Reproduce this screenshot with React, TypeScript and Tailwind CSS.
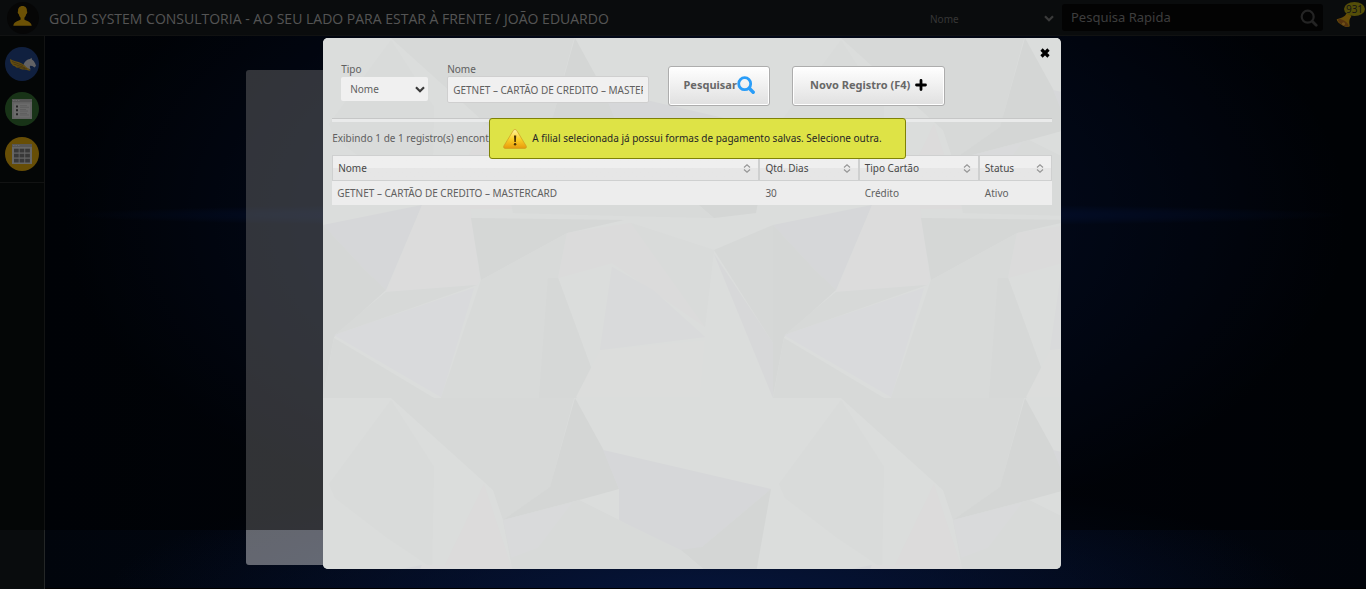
import type { ReactNode } from "react";

function Chevron({ className }: { className: string }) {
  return (
    <svg viewBox="0 0 10 7" aria-hidden="true" className={className}>
      <path d="M1 1.200 5 5.200 9 1.200" fill="none" stroke="currentColor" strokeWidth="2.200" />
    </svg>
  );
}

function PersonIcon() {
  return (
    <svg viewBox="0 0 32 32" className="size-8" aria-hidden="true">
      <circle cx="16" cy="16" r="16" fill="#0c0c0c" />
      <path
        d="M16 2.800c-3 0-4.700 2.200-4.400 5.200-.7.200-.5 2.400.7 2.900.3 1.600 1 2.700 1.800 3.500v1.900c-.6 1.200-6.600 1.400-7.300 6.200h18.400c-.7-4.800-6.700-5-7.300-6.200v-1.900c.8-.8 1.500-1.900 1.800-3.500 1.200-.5 1.400-2.700.7-2.900.3-3-1.400-5.200-4.400-5.200Z"
        transform="translate(-.5 1.300)"
        fill="#d8a20a"
      />
    </svg>
  );
}

function PegasusIcon() {
  return (
    <svg viewBox="0 0 34 34" className="size-[34px]" aria-hidden="true">
      <circle cx="17" cy="17" r="17" fill="#21407f" />
      <path
        d="M5 12c3 2 8 2.500 11.500 4.200 2 1 4.500 3 6.500 3.800l2.500 3.800c-3-.3-4.500-1-6-1.200-3 .1-4.500-.8-5.500-1.600-2 0-3.500-.8-4-1.800-1.800-.2-2.600-1-3-2-1.200-.8-2-2.800-2-5.200Z"
        fill="#c99a20"
      />
      <path d="M7 14.500 18 18.500M8.500 17 20 20.800M12 20l10 2" stroke="#7a6028" strokeWidth=".7" />
      <path
        d="M18.500 17.500c1-3 3.500-5.200 6.500-5.500l1.500-1.300.4 1.700c1.500.6 2.300 2.200 3.300 4l.8 2.400-1.400 1.600-2.300-1.300-2.300-.3c-.4 1.300.2 2.600.8 3.700-2.300-.6-4.800-2.600-7.300-5.300Z"
        fill="#c4c5ca"
      />
    </svg>
  );
}

function ListIcon() {
  return (
    <svg viewBox="0 0 34 34" className="size-[34px]" aria-hidden="true">
      <circle cx="17" cy="17" r="17" fill="#30672e" />
      <rect x="7" y="7" width="20" height="20" rx=".6" fill="#c4c4c4" />
      <rect x="7" y="7" width="20" height="3" fill="#acacac" />
      <path d="M8 8.500h1.500M10.500 8.500H12M13 8.500h1.500" stroke="#d0d0d0" />
      <rect x="9" y="11.500" width="16" height="14" fill="#d6d6d6" />
      <path d="M11 13.500h2v2h-2zM11 17.300h2v2h-2zM11 21.200h2v2h-2z" fill="#4a4a4a" />
      <path d="M15 13.700h7M15 15.300h9M15 17.500h6M15 19.100h8M15 21.400h7M15 23h9" stroke="#b5b5b5" strokeWidth=".8" />
    </svg>
  );
}

function GridIcon() {
  const steps = [0, 1, 2];
  return (
    <svg viewBox="0 0 34 34" className="size-[34px]" aria-hidden="true">
      <circle cx="17" cy="17" r="17" fill="#cf9c0c" />
      <rect x="7" y="7" width="20" height="20" rx=".6" fill="#cccccc" />
      <rect x="7" y="7" width="20" height="3" fill="#acacac" />
      <path d="M8 8.500h1.500M10.500 8.500H12M13 8.500h1.500" stroke="#d0d0d0" />
      {steps.map((r) =>
        steps.map((c) => (
          <rect key={`${r}-${c}`} x={9 + c * 5.6} y={11.7 + r * 5} width="4.700" height="3.800" fill="#707070" />
        )),
      )}
    </svg>
  );
}

function SearchIcon({ className, weight }: { className: string; weight: number }) {
  return (
    <svg viewBox="0 0 18 18" aria-hidden="true" className={className}>
      <circle cx="7.700" cy="7.700" r="6" fill="none" stroke="currentColor" strokeWidth={weight} />
      <path d="m12.500 12.500 3.700 3.700" stroke="currentColor" strokeWidth={weight + 0.6} strokeLinecap="round" />
    </svg>
  );
}

function BellIcon() {
  return (
    <svg viewBox="0 0 16 16" className="size-4" aria-hidden="true">
      <path
        d="M11.500 1c2 .8 3.300 2 3.800 3.800-1.700 1.700-2 3.800-2 6l.5 3.400c-1.300 1.300-4 1-7-.8C3 11.500.8 9.200.7 7.200l3.400-.9c2.900-.9 5-2.200 6-4.300Z"
        fill="#d09a10"
      />
      <ellipse cx="7.200" cy="10.800" rx="6.200" ry="2.300" transform="rotate(33 7.200 10.800)" fill="#a8641c" />
      <circle cx="7.500" cy="11.800" r="1.600" fill="#e0a030" />
    </svg>
  );
}

function WarningIcon() {
  return (
    <svg viewBox="0 0 24 20" className="h-5 w-6 shrink-0" aria-hidden="true">
      <defs>
        <linearGradient id="warn" x1="0" y1="0" x2="0" y2="1">
          <stop offset="0" stopColor="#fdf3a0" />
          <stop offset=".5" stopColor="#fbd128" />
          <stop offset="1" stopColor="#e89a0c" />
        </linearGradient>
      </defs>
      <path d="M10.500 1.200q1.500-1.600 3 0l9.800 16q.5 2-1.300 2.200H2q-1.800-.2-1.300-2.200Z" fill="url(#warn)" stroke="#d09a20" strokeWidth=".7" />
      <path d="M11 6.500h2.200l-.4 6.500h-1.400Z" fill="#4a3205" />
      <circle cx="12.100" cy="15.300" r="1.200" fill="#4a3205" />
    </svg>
  );
}

function PlusIcon() {
  return (
    <svg viewBox="0 0 12 12" className="size-3" aria-hidden="true">
      <path d="M6 1.500v9M1.500 6h9" stroke="#000" strokeWidth="2.800" strokeLinecap="round" />
    </svg>
  );
}

function SortIcon() {
  return (
    <svg viewBox="0 0 8 9" className="h-[9px] w-2 shrink-0" aria-hidden="true">
      <path d="M1 3.500 4 .8 7 3.500M1 5.500l3 2.700 3-2.700" fill="none" stroke="#969696" strokeWidth="1.200" />
    </svg>
  );
}

const facets: [string, string][] = [
  ["68,0 251,0 227,89 180,122 170,92", "#d7d9d8"],
  ["252,0 280,51 296,91 256,102 180,122 227,89", "#d4d6d5"],
  ["280,52 448,91 379,149 358,156 296,122 296,91", "#d6d7d9"],
  ["448,91 433,175 391,180 358,152 379,149", "#d4d6d5"],
  ["256,102 296,122 358,152 391,180 300,178 190,175 180,122", "#d8dad9"],
  ["180,122 250,104 215,150 188,160", "#d9dadb"],
  ["68,2 6,86 12,100 63,139 109,170 111,69", "#d9dbda"],
  ["161,86 189,171 120,171", "#dcdbdb"],
  ["0,187 99,167 63,252 42,232", "#d6d7d9"],
  ["0,187 42,232 63,252 11,299 0,358", "#d5d7d6"],
  ["99,167 147,167 157,242 154,247 63,254", "#dcdcdc"],
  ["63,254 154,247 60,280 11,297", "#d7d9d8"],
  ["148,180 301,182 244,195 158,242", "#d5d7d6"],
  ["158,242 244,195 235,240 270,335 253,360 118,360", "#d8dad9"],
  ["225,240 235,240 270,335 253,360 216,360", "#d6d8d7"],
  ["11,297 151,250 118,359", "#d9dadc"],
  ["11,300 111,360 0,360", "#d7d9d8"],
  ["244,195 308,185 382,289 289,225 235,240", "#dbdbdb"],
  ["308,185 391,212 382,289", "#d9dbda"],
  ["289,229 330,252 382,299 277,312", "#d9dadb"],
  ["277,312 382,302 377,359 253,359", "#dcdddc"],
  ["391,212 450,187 450,305", "#d6d8d7"],
  ["391,216 450,305 450,360", "#d7d8d9"],
];

function FacetBackdrop() {
  return (
    <svg className="absolute inset-0 size-full" aria-hidden="true">
      <defs>
        <pattern id="facets" width="450" height="360" patternUnits="userSpaceOnUse">
          <rect width="450" height="360" fill="#dbdddc" />
          {facets.map(([points, fill]) => (
            <polygon key={points} points={points} fill={fill} />
          ))}
        </pattern>
      </defs>
      <rect width="100%" height="100%" fill="url(#facets)" />
    </svg>
  );
}

const sideItems: { label: string; icon: ReactNode }[] = [
  { label: "Pegasus", icon: <PegasusIcon /> },
  { label: "Lista", icon: <ListIcon /> },
  { label: "Grade", icon: <GridIcon /> },
];

const columns = [
  { title: "Nome", width: "w-[59.500%]" },
  { title: "Qtd. Dias", width: "w-[13.800%]" },
  { title: "Tipo Cartão", width: "w-[16.700%]" },
  { title: "Status", width: "w-[10%]" },
];

const rows = [["GETNET – CARTÃO DE CREDITO – MASTERCARD", "30", "Crédito", "Ativo"]];

const buttonClass =
  "flex h-10 items-center justify-center rounded-[3px] border border-[#adadad] bg-linear-to-b from-white to-[#e0e0e0] pb-[2px] text-[11px] font-bold text-[#686868] shadow-[inset_0_0_0_1px_#fff]";

function SearchDialog() {
  return (
    <section
      role="dialog"
      aria-label="Pesquisa"
      className="relative h-[calc(90vh+1px)] w-[54vw] overflow-hidden rounded-[5px] bg-[#dadcdb] text-[10px] text-[#606060]"
    >
      <FacetBackdrop />
      <div className="relative flex flex-col px-[9px] pt-7">
        <button type="button" aria-label="Fechar" className="absolute top-[9px] right-[10px]">
          <svg viewBox="0 0 12 12" className="size-3" aria-hidden="true">
            <path d="m2.500 2.500 7 7M9.500 2.500l-7 7" stroke="#000" strokeWidth="3.200" />
          </svg>
        </button>

        <form className="flex h-[52px] items-start pl-[9px]">
          <div className="mr-[19px] flex w-[87px] flex-col">
            <label htmlFor="tipo" className="-mt-1 h-[15px] leading-[14px]">
              Tipo
            </label>
            <div className="relative">
              <select id="tipo" className="h-6 w-full appearance-none rounded-[2px] bg-[#f0f0f0] pl-[9px]">
                <option>Nome</option>
              </select>
              <Chevron className="pointer-events-none absolute top-[9px] right-[3px] h-[7px] w-[10px] text-[#3c3c3c]" />
            </div>
          </div>
          <div className="mr-[19px] flex w-[202px] flex-col">
            <label htmlFor="nome" className="-mt-1 h-[14px] leading-[14px]">
              Nome
            </label>
            <input
              id="nome"
              defaultValue="GETNET – CARTÃO DE CREDITO – MASTERCARD"
              className="h-[27px] rounded-[2px] border border-[#cfcfcf] bg-[#f0f0f0] px-[5px]"
            />
          </div>
          <button type="button" className={`${buttonClass} mr-[22px] w-[102px]`}>
            Pesquisar
            <SearchIcon className="size-[18px] text-[#2a9df8]" weight={2.8} />
          </button>
          <button type="button" className={`${buttonClass} w-[153px] gap-[5px]`}>
            Novo Registro (F4)
            <PlusIcon />
          </button>
        </form>

        <hr className="h-1 border-t border-b-0 border-[#c6c7c7] bg-[#e9eaea]" />

        <p className="h-[33px] pt-[9px] leading-[14px]">Exibindo 1 de 1 registro(s) encontrado(s)</p>

        <table className="w-full table-fixed border-separate border-spacing-0 text-left">
          <thead>
            <tr>
              {columns.map((c) => (
                <th
                  key={c.title}
                  className={`${c.width} h-[26px] border-t border-r-2 border-b border-[#cfd0d0] bg-linear-to-b from-[#efefef] from-50% to-[#e6e6e6] to-50% px-[5px] py-0 font-normal text-[#484848] first:border-l last:border-r`}
                >
                  <span className="flex items-center justify-between">
                    {c.title}
                    <span className="pr-[2px]">
                      <SortIcon />
                    </span>
                  </span>
                </th>
              ))}
            </tr>
          </thead>
          <tbody>
            {rows.map((row) => (
              <tr key={row[0]}>
                {row.map((cell) => (
                  <td key={cell} className="h-6 bg-[#ededed] px-[5px] py-0">
                    {cell}
                  </td>
                ))}
              </tr>
            ))}
          </tbody>
        </table>

        <div
          role="alert"
          className="absolute top-20 left-[166px] flex h-[41px] w-[417px] items-center gap-[5px] rounded-[3px] border border-[#7f8206] bg-[#dee346] pl-[13px] whitespace-nowrap text-[#262626]"
        >
          <WarningIcon />
          <span>A filial selecionada já possui formas de pagamento salvas. Selecione outra.</span>
        </div>
      </div>
    </section>
  );
}

export default function App() {
  return (
    <div className="relative flex h-screen flex-col overflow-hidden bg-black font-['Noto_Sans',sans-serif]">
      <header className="flex h-9 shrink-0 items-center border-b border-[#222424] bg-[#14181a] pl-[7px]">
        <PersonIcon />
        <h1 className="ml-[10px] pt-[2px] font-['Open_Sans',sans-serif] text-[14px] whitespace-nowrap text-[#a8a8a8]">
          GOLD SYSTEM CONSULTORIA - AO SEU LADO PARA ESTAR À FRENTE / JOÃO EDUARDO
        </h1>
        <div className="relative ml-auto w-[132px] pt-[2px]">
          <select aria-label="Campo de pesquisa" className="h-6 w-full appearance-none text-[10px] text-[#6c6c6c]">
            <option>Nome</option>
          </select>
          <Chevron className="pointer-events-none absolute top-3 right-[8px] h-[7px] w-[10px] text-[#747474]" />
        </div>
        <div className="mr-[13px] flex h-[27px] w-[261px] items-center rounded-[3px] bg-[#060606] pr-[5px]">
          <input
            aria-label="Pesquisa Rapida"
            placeholder="Pesquisa Rapida"
            className="min-w-0 flex-1 pl-[9px] text-[13px] placeholder:text-[#7a7a7a]"
          />
          <SearchIcon className="size-[18px] text-[#484848]" weight={2.2} />
        </div>
        <a href="#avisos" aria-label="931 avisos" className="relative mb-[5px] flex h-[26px] w-[30px] items-end">
          <BellIcon />
          <span className="absolute top-0 left-2 flex h-[14px] w-[21px] items-center justify-center rounded-[50%] bg-[#a99c10] text-[10px] text-[#2c2c2c]">
            931
          </span>
        </a>
      </header>

      <div className="flex min-h-0 flex-1">
        <nav className="w-[45px] shrink-0 border-r border-[#242727] bg-[#090c0d]">
          <ul className="flex flex-col gap-[11px] border-b border-[#242727] pt-[11px] pb-[11px] pl-[5px]">
            {sideItems.map((item) => (
              <li key={item.label}>
                <a href="#menu" aria-label={item.label} className="block size-[34px]">
                  {item.icon}
                </a>
              </li>
            ))}
          </ul>
        </nav>
        <main className="flex-1 border-b border-black bg-[radial-gradient(ellipse_640px_12px_at_50%_179px,#0a2468_0%,#061a50cc_55%,transparent_100%),radial-gradient(ellipse_640px_340px_at_50%_180px,#061c50_0%,#04102e_55%,transparent_100%),radial-gradient(ellipse_600px_130px_at_50%_560px,#06153a_0%,transparent_100%),linear-gradient(90deg,#01050c,#020714_40%,#020714_60%,#01040a)] pt-[34px] pl-[201px]">
          <div className="h-[calc(100%-23px)] w-[800px] rounded-[3px] bg-[#dcdcde]/45" />
        </main>
      </div>

      <div className="absolute inset-x-0 top-0 h-[90vh] bg-black/50" />
      <div className="absolute inset-x-0 top-[38px] flex justify-center pl-[18px]">
        <SearchDialog />
      </div>
    </div>
  );
}
